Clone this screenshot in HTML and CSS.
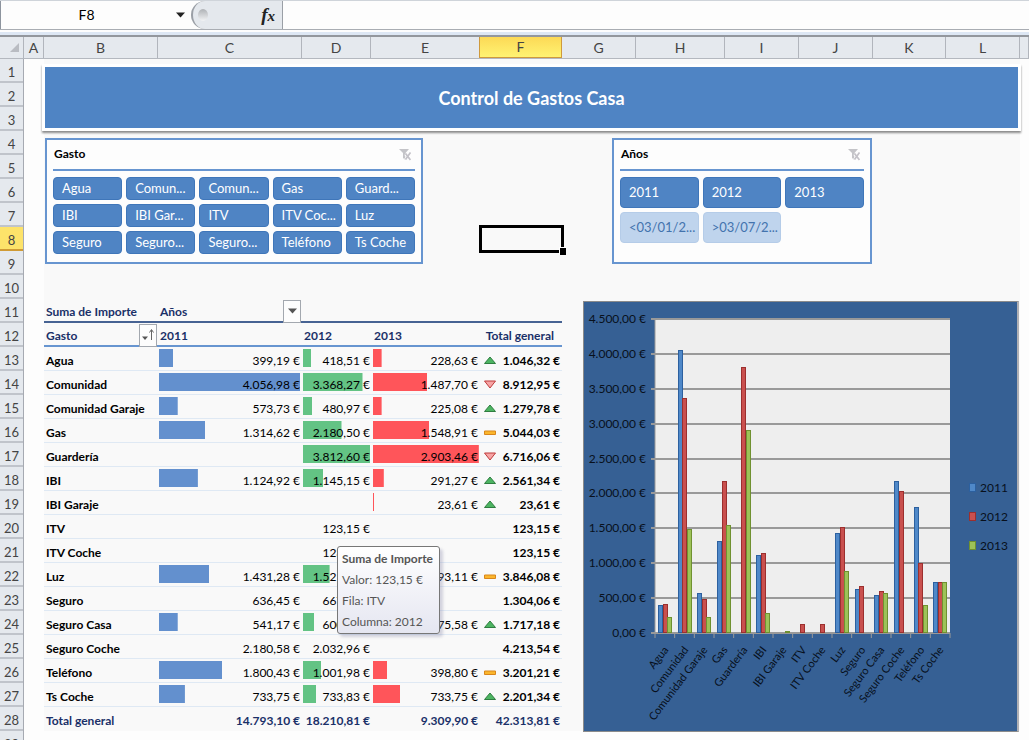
FILE: index.html
```html
<!DOCTYPE html>
<html lang="es">
<head>
<meta charset="utf-8">
<title>Control de Gastos Casa</title>
<link rel="stylesheet" href="styles.css">
</head>
<body>
<div class="app">
  <div class="formula-bar">
    <div class="name-box">
      <input class="name-input" type="text" value="F8" aria-label="Cuadro de nombres">
      <button class="name-arrow" type="button" aria-label="Nombres definidos"><svg width="9" height="6" viewBox="0 0 9 6"><path d="M0 .5h9L4.500 5.500z" fill="#222"/></svg></button>
    </div>
    <div class="fx-area"><span class="knob"></span><button class="fx" type="button" aria-label="Insertar función"><i>f</i><b>x</b></button></div>
    <input class="formula-input" type="text" aria-label="Barra de fórmulas">
  </div>

  <div class="columns">
    <div class="corner"><svg width="9" height="9" viewBox="0 0 9 9"><path d="M9 0v9H0z" fill="#b9bcc2"/></svg></div>
    <div>A</div><div>B</div><div>C</div><div>D</div><div>E</div><div class="active">F</div><div>G</div><div>H</div><div>I</div><div>J</div><div>K</div><div>L</div><div></div>
  </div>

  <main class="sheet">
    <div class="rows">
      <div>1</div><div>2</div><div>3</div><div>4</div><div>5</div><div>6</div><div>7</div><div class="active">8</div><div>9</div><div>10</div><div>11</div><div>12</div><div>13</div><div>14</div><div>15</div><div>16</div><div>17</div><div>18</div><div>19</div><div>20</div><div>21</div><div>22</div><div>23</div><div>24</div><div>25</div><div>26</div><div>27</div><div>28</div><div>29</div>
    </div>
    <div class="canvas"></div>
    <h1 class="banner">Control de Gastos Casa</h1>

    <section class="slicer slicer-gasto">
      <header><h2>Gasto</h2><button class="clear" type="button" aria-label="Borrar filtro"><svg width="12" height="13" viewBox="0 0 12 13"><path d="M0 1h10L6.500 5v7L4 10V5z" fill="#c4c4c8"/><path d="M6.500 6l5 6M11.500 4.500l-5 7" stroke="#fff" stroke-width="3"/><path d="M6.500 5.500l5 6.500M11.500 4.500l-5 7" stroke="#c4c2c8" stroke-width="1.800"/></svg></button></header>
      <div class="options five">
        <button type="button">Agua</button><button type="button">Comun...</button><button type="button">Comun...</button><button type="button">Gas</button><button type="button">Guard...</button>
        <button type="button">IBI</button><button type="button">IBI Gar...</button><button type="button">ITV</button><button type="button">ITV Coc...</button><button type="button">Luz</button>
        <button type="button">Seguro</button><button type="button">Seguro...</button><button type="button">Seguro...</button><button type="button">Teléfono</button><button type="button">Ts Coche</button>
      </div>
    </section>

    <div class="selection"><span class="handle"></span></div>

    <section class="slicer slicer-years">
      <header><h2>Años</h2><button class="clear" type="button" aria-label="Borrar filtro"><svg width="12" height="13" viewBox="0 0 12 13"><path d="M0 1h10L6.500 5v7L4 10V5z" fill="#c4c4c8"/><path d="M6.500 6l5 6M11.500 4.500l-5 7" stroke="#fff" stroke-width="3"/><path d="M6.500 5.500l5 6.500M11.500 4.500l-5 7" stroke="#c4c2c8" stroke-width="1.800"/></svg></button></header>
      <div class="options three">
        <button type="button">2011</button><button type="button">2012</button><button type="button">2013</button>
        <button class="empty" type="button">&lt;03/01/2...</button><button class="empty" type="button">&gt;03/07/2...</button>
      </div>
    </section>

    <div class="pivot-wrap">
      <table class="pivot">
        <colgroup><col class="c-b"><col class="c-c"><col class="c-d"><col class="c-e"><col class="c-f"></colgroup>
        <thead>
          <tr class="top"><th>Suma de Importe</th><th><div class="field"><span>Años</span><button type="button" aria-label="Filtrar años"><svg width="9" height="6" viewBox="0 0 9 6"><path d="M0 .5h9L4.500 5.500z" fill="#555"/></svg></button></div></th><th></th><th></th><th></th></tr>
          <tr class="sub"><th><div class="field"><span>Gasto</span><button type="button" aria-label="Ordenar gasto"><svg width="13" height="14" viewBox="0 0 13 14"><path d="M0 8.500h6L3 12z" fill="#555"/><path d="M9.500 12V2M7.500 4.500l2-3 2 3" fill="none" stroke="#666"/></svg></button></div></th><th>2011</th><th>2012</th><th>2013</th><th class="right">Total general</th></tr>
        </thead>
        <tbody>
          <tr><th>Agua</th><td class="bar blue" style="--w:10%">399,19 €</td><td class="bar green" style="--w:12%">418,51 €</td><td class="bar red" style="--w:8%">228,63 €</td><td class="up">1.046,32 €</td></tr>
          <tr><th>Comunidad</th><td class="bar blue" style="--w:98%">4.056,98 €</td><td class="bar green" style="--w:85%">3.368,27 €</td><td class="bar red" style="--w:50%">1.487,70 €</td><td class="down">8.912,95 €</td></tr>
          <tr><th>Comunidad Garaje</th><td class="bar blue" style="--w:13%">573,73 €</td><td class="bar green" style="--w:13%">480,97 €</td><td class="bar red" style="--w:8%">225,08 €</td><td class="up">1.279,78 €</td></tr>
          <tr><th>Gas</th><td class="bar blue" style="--w:32%">1.314,62 €</td><td class="bar green" style="--w:55%">2.180,50 €</td><td class="bar red" style="--w:52%">1.548,91 €</td><td class="same">5.044,03 €</td></tr>
          <tr><th>Guardería</th><td></td><td class="bar green" style="--w:96%">3.812,60 €</td><td class="bar red" style="--w:98%">2.903,46 €</td><td class="down">6.716,06 €</td></tr>
          <tr><th>IBI</th><td class="bar blue" style="--w:27%">1.124,92 €</td><td class="bar green" style="--w:29%">1.145,15 €</td><td class="bar red" style="--w:10%">291,27 €</td><td class="up">2.561,34 €</td></tr>
          <tr><th>IBI Garaje</th><td></td><td></td><td class="bar red" style="--w:1%">23,61 €</td><td class="up">23,61 €</td></tr>
          <tr><th>ITV</th><td></td><td>123,15 €</td><td></td><td>123,15 €</td></tr>
          <tr><th>ITV Coche</th><td></td><td>123,15 €</td><td></td><td>123,15 €</td></tr>
          <tr><th>Luz</th><td class="bar blue" style="--w:35%">1.431,28 €</td><td class="bar green" style="--w:38%">1.521,69 €</td><td class="bar red" style="--w:30%">893,11 €</td><td class="same">3.846,08 €</td></tr>
          <tr><th>Seguro</th><td>636,45 €</td><td>667,61 €</td><td></td><td>1.304,06 €</td></tr>
          <tr><th>Seguro Casa</th><td class="bar blue" style="--w:13%">541,17 €</td><td class="bar green" style="--w:16%">600,43 €</td><td class="bar red" style="--w:20%">575,58 €</td><td class="up">1.717,18 €</td></tr>
          <tr><th>Seguro Coche</th><td>2.180,58 €</td><td>2.032,96 €</td><td></td><td>4.213,54 €</td></tr>
          <tr><th>Teléfono</th><td class="bar blue" style="--w:44%">1.800,43 €</td><td class="bar green" style="--w:26%">1.001,98 €</td><td class="bar red" style="--w:13%">398,80 €</td><td class="same">3.201,21 €</td></tr>
          <tr><th>Ts Coche</th><td class="bar blue" style="--w:18%">733,75 €</td><td class="bar green" style="--w:19%">733,83 €</td><td class="bar red" style="--w:25%">733,75 €</td><td class="up">2.201,34 €</td></tr>
        </tbody>
        <tfoot>
          <tr><th>Total general</th><td>14.793,10 €</td><td>18.210,81 €</td><td>9.309,90 €</td><td>42.313,81 €</td></tr>
        </tfoot>
      </table>
      <div class="tooltip" role="tooltip"><strong>Suma de Importe</strong><span>Valor: 123,15 €</span><span>Fila: ITV</span><span>Columna: 2012</span></div>
    </div>

    <figure class="chart">
      <svg id="chart" viewBox="0 0 433 429" role="img" aria-label="Gastos por año"></svg>
    </figure>
  </main>
</div>
<script src="chart.js"></script>
</body>
</html>
```

FILE: styles.css
```css
:root {
  --cols: 24px 20fr 114fr 144fr 69fr 109fr 82fr 74fr 89fr 74fr 74fr 73fr 74fr 9fr;
  --row: 24px;
  --blue: #4f84c4;
  --navy: #1a3068;
}

* { box-sizing: border-box; }

body {
  margin: 0;
  background: #fdfdfd;
  color: #000;
  font-family: Lato, "Open Sans", sans-serif;
  font-size: 12px;
  line-height: 16px;
}

button, input { font: inherit; color: inherit; margin: 0; padding: 0; border: 0; background: none; }
h1, h2, figure { margin: 0; }

.app { height: 100vh; overflow: hidden; display: flex; flex-direction: column; }

/* formula bar */
.formula-bar {
  flex: none;
  display: flex;
  height: 30px;
  border-top: 1px solid #cfd4da;
  border-bottom: 1px solid #a9adb3;
}
.name-box { flex: none; display: flex; align-items: center; width: 191px; padding-right: 6px; border-left: 1px solid #8d949e; }
.name-input { flex: 1; min-width: 0; text-align: center; font-size: 14px; padding-right: 4px; }
.name-arrow { display: flex; padding: 3px 0; }
.fx-area {
  flex: none;
  display: flex;
  align-items: center;
  justify-content: space-between;
  width: 92px;
  padding: 0 7px 0 5px;
  background: #e4e8ed;
  border: 1px solid #9a9fa6;
  border-width: 0 1px 0 2px;
  border-radius: 16px 0 0 16px;
}
.knob { width: 10px; height: 12px; border-radius: 50%; background: linear-gradient(#aeb1b5, #f2f3f5); }
.fx { font-family: "Liberation Serif", serif; font-size: 19px; line-height: 20px; color: #222; font-weight: bold; }
.fx b { font-size: 15px; font-style: italic; }
.formula-input { flex: 1; min-width: 0; }

/* column letters */
.columns {
  flex: none;
  display: grid;
  grid-template-columns: var(--cols);
  height: 24px;
  margin-top: 5px;
  border-top: 2px solid #93979d;
  border-bottom: 1px solid #b4b8bf;
  box-shadow: 0 -3px #dde7f4;
  background: #e5e9ee;
  color: #444;
  font-size: 14px;
}
.columns div { display: flex; align-items: center; justify-content: center; border-right: 1px solid #b1b5bc; }
.columns .corner { justify-content: flex-end; padding-right: 4px; }
.columns .active { background: linear-gradient(#fcd956, #fff372); border: 1px solid #cf9a3c; border-top: 0; margin-left: -1px; }

/* sheet */
.sheet {
  flex: 1;
  min-height: 0;
  display: grid;
  grid-template-columns: var(--cols);
  grid-template-rows: repeat(29, var(--row));
}
.rows { grid-column: 1; grid-row: 1 / -1; background: #e5e9ee; border-right: 1px solid #a6aab2; color: #444; font-size: 13px; }
.rows div { height: var(--row); display: flex; align-items: center; justify-content: center; padding-top: 3px; border-bottom: 2px solid #c0c4cb; }
.rows .active { background: #fde36a; border-color: #d09b35; }
.canvas { grid-column: 3 / 14; grid-row: 1 / 29; background: #f9f9f9; }

.banner {
  grid-column: 3 / 14;
  grid-row: 1 / 4;
  display: flex;
  align-items: center;
  justify-content: center;
  margin: 5px -1px 0 -2px;
  background: var(--blue);
  border: 3px solid #fff;
  box-shadow: 0 2px 2px #8b8b8b;
  color: #fff;
  font-size: 18px;
  line-height: 24px;
}

/* slicers */
.slicer { background: #fdfdfd; border: 2px solid #6795d0; padding: 5px 6px 0; }
.slicer-gasto { grid-column: 3 / 7; grid-row: 4 / 10; margin: 7px 57px 11px 1px; }
.slicer-years { grid-column: 8 / 12; grid-row: 4 / 10; margin: 7px 1px 11px 50px; }
.slicer header {
  display: flex;
  align-items: center;
  justify-content: space-between;
  height: 26px;
  padding: 0 4px 6px 1px;
  margin-bottom: 6px;
  border-bottom: 2px solid #6795d0;
}
.slicer h2 { font-size: 12px; line-height: 16px; }
.clear { display: flex; }
.options { display: grid; gap: 4px; }
.five { grid-template-columns: repeat(5, 1fr); grid-auto-rows: 23px; }
.three { grid-template-columns: repeat(3, 1fr); grid-auto-rows: 31px; }
.options button {
  min-width: 0;
  overflow: hidden;
  padding: 0 0 1px 8px;
  text-align: left;
  white-space: nowrap;
  border: 1px solid #3f76b9;
  border-radius: 4px;
  background: var(--blue);
  color: #fff;
  font-size: 13px;
}
.options .empty { background: #bfd4ed; border-color: #b5cce8; color: #4373ad; }

.selection { grid-column: 7; grid-row: 8; position: relative; margin: -2px -2px -2px -1px; border: 3px solid #000; background: #f9f9f9; }
.handle { position: absolute; right: -5px; bottom: -5px; width: 7px; height: 8px; background: #000; border: solid #fff; border-width: 1px 0 0 1px; }

/* pivot table */
.pivot-wrap { grid-column: 3 / 8; grid-row: 11 / 29; position: relative; }
.pivot { width: 100%; table-layout: fixed; border-collapse: separate; border-spacing: 0; }
.c-b { width: 114px; }
.c-c { width: 144px; }
.c-d { width: 70px; }
.c-e { width: 108px; }
.c-f { width: 82px; }
.pivot th, .pivot td { height: var(--row); padding: 4px 2px 0; white-space: nowrap; border-bottom: 1px solid #dfe9f4; }
.pivot th { text-align: left; }
.pivot td { text-align: right; }
.pivot td:last-child { font-weight: bold; padding-left: 4px; }
.pivot thead th { color: var(--navy); }
.pivot thead .right { text-align: right; padding-right: 8px; }
.pivot .top th { border-bottom: 2px solid #476393; }
.pivot .sub th { border-bottom: 2px solid #6795d0; }
.pivot tfoot th, .pivot tfoot td { color: var(--navy); font-weight: bold; border-bottom: 0; }
.field { display: flex; align-items: center; justify-content: space-between; height: 16px; }
.field button { flex: none; display: flex; align-items: center; justify-content: center; width: 18px; height: 23px; margin: -5px -1px -3px 0; background: #fdfdfd; border: 1px solid #a3a8af; }
.bar { background: linear-gradient(var(--fill), var(--fill)) no-repeat 1px 2px; background-size: var(--w) 18px; }
.blue { --fill: #6390ce; }
.green { --fill: #63c384; }
.red { --fill: #ff555a; }
.icon { float: left; margin-top: 3px; }

.tooltip {
  position: absolute;
  left: 293px;
  top: 247px;
  display: flex;
  flex-direction: column;
  gap: 5px;
  padding: 4px 6px 3px 4px;
  border: 1px solid #777;
  border-radius: 3px;
  background: linear-gradient(#fff, #e5e6f1);
  box-shadow: 3px 3px 3px #8888a855;
  color: #555;
  font-size: 12px;
  white-space: nowrap;
}

/* chart */
.chart { grid-column: 8 / 14; grid-row: 11 / 29; margin: 2px 1px -1px 21px; border: 1px solid #8b8b8b; border-right: 2px solid #b0b0b4; background: #366094; }
.chart svg { display: block; width: 100%; height: 100%; }
.chart text { font-size: 12px; fill: #08101c; }
.chart .category { font-size: 11px; }
.grid-line { stroke: #999; stroke-width: 2; }
```

FILE: chart.js
```js
const NS = "http://www.w3.org/2000/svg";

function draw(parent, tag, attrs, text) {
  const node = document.createElementNS(NS, tag);
  for (const key in attrs) node.setAttribute(key, attrs[key]);
  if (text) node.textContent = text;
  parent.appendChild(node);
  return node;
}

// Trend marks in the total column
const marks = {
  up: '<path d="M6 1l5.500 6.500H.5z" fill="#4db562" stroke="#2f7d40"/>',
  down: '<path d="M6 8L.5 1h11z" fill="#f7a5a5" stroke="#bf3b3b"/>',
  same: '<path d="M.5 3h11v3.500H.5z" fill="#fbb62c" stroke="#d9861b"/>'
};
for (const kind in marks) {
  document.querySelectorAll("td." + kind).forEach(cell => {
    const svg = document.createElementNS(NS, "svg");
    svg.setAttribute("class", "icon");
    svg.setAttribute("width", 12);
    svg.setAttribute("height", 9);
    svg.innerHTML = marks[kind];
    cell.prepend(svg);
  });
}

const series = [
  { name: "2011", fill: "#4f88c8", stroke: "#2c609f" },
  { name: "2012", fill: "#c9504e", stroke: "#9c2f2e" },
  { name: "2013", fill: "#9dc258", stroke: "#6f9130" }
];
const data = [
  ["Agua", 399, 419, 229],
  ["Comunidad", 4057, 3368, 1488],
  ["Comunidad Garaje", 574, 481, 225],
  ["Gas", 1315, 2181, 1549],
  ["Guardería", 0, 3813, 2903],
  ["IBI", 1125, 1145, 291],
  ["IBI Garaje", 0, 0, 24],
  ["ITV", 0, 123, 0],
  ["ITV Coche", 0, 123, 0],
  ["Luz", 1431, 1522, 893],
  ["Seguro", 636, 668, 0],
  ["Seguro Casa", 541, 600, 576],
  ["Seguro Coche", 2181, 2033, 0],
  ["Teléfono", 1800, 1002, 399],
  ["Ts Coche", 734, 734, 734]
];

const plot = { left: 71, right: 366, top: 17, bottom: 331 };
const chart = document.getElementById("chart");
const y = value => Math.round(plot.bottom - value / 4500 * (plot.bottom - plot.top));

draw(chart, "rect", { x: plot.left, y: plot.top, width: plot.right - plot.left, height: plot.bottom - plot.top, fill: "#eee" });
for (let v = 0; v <= 4500; v += 500) {
  const label = (v >= 1000 ? Math.floor(v / 1000) + "." + String(v % 1000).padStart(3, "0") : v) + ",00 €";
  draw(chart, "line", { x1: plot.left - 4, x2: plot.right, y1: y(v), y2: y(v), class: "grid-line" });
  draw(chart, "text", { x: 62, y: y(v) + 4, "text-anchor": "end" }, label);
}
draw(chart, "line", { x1: plot.left, x2: plot.left, y1: plot.top, y2: plot.bottom, stroke: "#999" });

const step = (plot.right - plot.left) / data.length;
data.forEach((row, i) => {
  const x0 = plot.left + i * step;
  series.forEach((s, k) => {
    const value = row[k + 1];
    if (!value) return;
    const x = Math.round(x0 + 3 + k * 4.5) + 0.5;
    draw(chart, "rect", { x, y: y(value) + 0.5, width: 4, height: Math.max(plot.bottom - y(value) - 1, 1), fill: s.fill, stroke: s.stroke });
  });
  draw(chart, "line", { x1: x0, x2: x0, y1: plot.bottom, y2: plot.bottom + 5, stroke: "#999" });
  const x = Math.round(x0 + step / 2 + 4);
  draw(chart, "text", { x, y: 348, class: "category", "text-anchor": "end", transform: `rotate(-53 ${x} 348)` }, row[0]);
});
draw(chart, "line", { x1: plot.right, x2: plot.right, y1: plot.bottom, y2: plot.bottom + 5, stroke: "#999" });

series.forEach((s, k) => {
  const top = 181 + k * 29;
  draw(chart, "rect", { x: 385.5, y: top + 0.5, width: 6, height: 8, fill: s.fill, stroke: s.stroke });
  draw(chart, "text", { x: 396, y: top + 9 }, s.name);
});
```
